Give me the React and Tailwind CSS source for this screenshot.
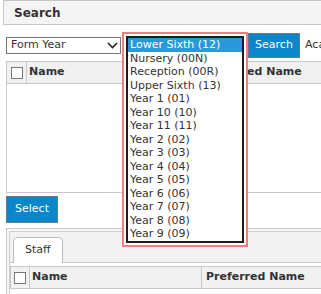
import React from 'react'

const forms = [
    "Lower Sixth (12)",
    "Nursery (00N)",
    "Reception (00R)",
    "Upper Sixth (13)",
    "Year 1 (01)",
    "Year 10 (10)",
    "Year 11 (11)",
    "Year 2 (02)",
    "Year 3 (03)",
    "Year 4 (04)",
    "Year 5 (05)",
    "Year 6 (06)",
    "Year 7 (07)",
    "Year 8 (08)",
    "Year 9 (09)",
]

const Box = () => (
    <span className="block w-[12px] h-[12px] border border-[#777] bg-white"></span>
)

const GridHeader = ({ boxCol }) => (
    <div className="flex h-[22px] bg-[#f1f1f1] border-b border-[#c8c8c8] text-[#333] font-bold">
        <div className={boxCol + " flex items-center justify-center border-r border-[#c8c8c8] shrink-0"}>
            <Box />
        </div>
        <div className="w-[172px] flex items-center pl-[2px] border-r border-[#c8c8c8] shrink-0">Name</div>
        <div className="flex items-center pl-[4px] whitespace-nowrap">Preferred Name</div>
    </div>
)

const App = () => {
    return (
        <div className="relative w-[321px] h-[294px] overflow-hidden bg-white font-['DejaVu_Sans',sans-serif] text-[11px] text-[#333]">
            <div className="ml-[3px] h-[25px] w-[330px] border border-[#c6c6c6] bg-[#f4f4f4] flex items-center pl-[10px]">
                <span className="text-[12px] font-bold text-[#333]">Search</span>
            </div>

            <div className="flex items-center h-[25px] mt-[8px] pl-[6px]">
                <div className="w-[115px] h-[17px] border border-[#777] bg-white flex items-center justify-between pl-[4px] pr-[2px] shrink-0">
                    <span>Form Year</span>
                    <svg width="11" height="7" viewBox="0 0 11 7">
                        <polyline points="1,1 5.5,5.5 10,1" fill="none" stroke="#222" strokeWidth="1.6" />
                    </svg>
                </div>
                <div className="w-[118px] h-[17px] ml-[5px] border border-[#777] bg-white shrink-0"></div>
                <button className="ml-[4px] w-[52px] h-[25px] bg-[#0a86ca] border border-[#6b7a86] text-white shrink-0">Search</button>
                <span className="ml-[5px] whitespace-nowrap">Academic Year</span>
            </div>

            <div className="ml-[6px] mt-[3px] w-[330px] h-[132px] border border-[#c8c8c8] bg-white">
                <GridHeader boxCol="w-[20px]" />
            </div>

            <button className="ml-[6px] mt-[3px] w-[52px] h-[27px] bg-[#0a86ca] border border-[#6b7a86] text-white">Select</button>

            <div className="ml-[6px] mt-[5px] w-[330px] h-[80px] border border-[#c8c8c8] bg-[#f7f7f7] pl-[2px] pt-[2px]">
                <div className="h-full border border-[#cfcfcf] bg-white">
                    <div className="h-[31px] bg-[#f2f2f2] border-b border-[#c8c8c8] flex items-end pl-[3px]">
                        <div className="h-[26px] -mb-px px-[11px] flex items-center bg-white border border-b-0 border-[#bdbdbd] rounded-t-[5px]">Staff</div>
                    </div>
                    <div className="mt-[3px] border-t border-l border-[#c8c8c8]">
                        <GridHeader boxCol="w-[19px]" />
                    </div>
                </div>
            </div>

            <div className="absolute left-[122px] top-[32px] w-[126px] h-[215px] border-2 border-[#f47c7c] bg-white p-[2px]">
                <div className="h-full border-2 border-[#1c1c1c] bg-white">
                    {forms.map((f, i) => (
                        <div key={f} className={(i === 0 ? "bg-[#2b98dc] text-white " : "text-[#333] ") + "h-[13.5px] leading-[13.5px] pl-[2px] whitespace-nowrap"}>{f}</div>
                    ))}
                </div>
            </div>
        </div>
    )
}

export default App
